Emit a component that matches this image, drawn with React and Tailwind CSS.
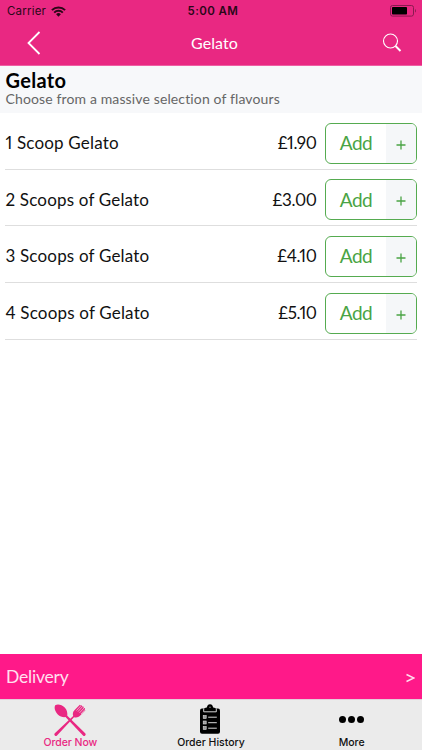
import React from "react";

const items = [
  { name: "1 Scoop Gelato", price: "£1.90" },
  { name: "2 Scoops of Gelato", price: "£3.00" },
  { name: "3 Scoops of Gelato", price: "£4.10" },
  { name: "4 Scoops of Gelato", price: "£5.10" },
];

function WifiIcon() {
  return (
    <svg width="15" height="11" viewBox="0 0 15 11" fill="none" stroke="#2b0718" strokeWidth="2">
      <path d="M0.9 4.1a9.4 9.4 0 0 1 13.2 0" />
      <path d="M3.2 6.6a6.1 6.1 0 0 1 8.6 0" />
      <path d="M7.5 10.7 5.1 8.3a3.4 3.4 0 0 1 4.8 0z" fill="#2b0718" stroke="none" />
    </svg>
  );
}

function BatteryIcon() {
  return (
    <svg width="27" height="12" viewBox="0 0 27 12">
      <rect x="0.5" y="0.5" width="23" height="10.6" rx="2" fill="none" stroke="#8a1a50" />
      <rect x="2" y="2" width="15" height="7.6" rx="0.8" fill="#000" />
      <path d="M25 4v3.6c1.2-.5 1.2-3.1 0-3.6z" fill="#8a1a50" />
    </svg>
  );
}

function CutleryIcon() {
  return (
    <svg width="34" height="34" viewBox="0 0 34 34" fill="#e92882">
      {/* spoon */}
      <path d="M2.2 2.2C5 .8 9 1.8 11.7 4.6c2.2 2.3 2.9 5.2 2.6 8.1L32.2 30.2a1.5 1.5 0 0 1-2.2 2.2L12.5 14.1c-2.7.3-5.5-.5-7.7-2.7C2 8.5.9 4.5 2.2 2.2z" />
      {/* fork */}
      <path d="M4 32.4A1.5 1.5 0 0 1 1.8 30.2L20.2 13c-.7-2.200-.4-4.200 1.200-5.800l5.400-5.500 1 .9 1-.3.5 1.300 1.200-.1.200 1.400 1.300.1-.3 1.300.7 1-5.400 5.500c-1.700 1.700-3.800 2-6 1.400z" />
      <path d="m28 2.6-4.500 4.900M29.500 3.700 25 8.600M31 5l-4.500 4.900M32 6.600l-4 4.400" stroke="#ebebeb" strokeWidth=".65" />
    </svg>
  );
}

function ClipboardIcon() {
  return (
    <svg width="20" height="30" viewBox="0 0 20 30">
      <rect x="0" y="4.5" width="20" height="25.3" rx="2" fill="#000" />
      <path d="M4.2 7.300V5.500c0-1.300 1-1.700 2.600-1.900C7.300 1.500 8.200.3 10 .3s2.700 1.200 3.200 3.300c1.600.2 2.600.6 2.600 1.900v1.800z" fill="#000" />
      <path d="M3.7 4.500v3.300h12.600V4.500" fill="none" stroke="#ebebeb" strokeWidth=".9" />
      <circle cx="10" cy="3.3" r=".8" fill="#888" />
      {[11.5, 17, 22.5].map((y) => (
        <g key={y}>
          <rect x="3.2" y={y} width="3" height="3" fill="#999" stroke="#ddd" strokeWidth=".6" />
          <path d={`M8.2 ${y + 1.7}h8.6`} stroke="#d8d8d8" />
        </g>
      ))}
    </svg>
  );
}

function MenuRow({ item }) {
  return (
    <div className="mx-[5px] h-[56.67px] flex items-center border-b border-[#dedede] text-[17px] text-[#111] proportional-nums">
      <span className="flex-1 pt-[4px] pl-[0.5px] tracking-[0.18px]">{item.name}</span>
      <span className="pt-[4px] mr-[8.5px] tracking-[-0.4px]">{item.price}</span>
      <button className="w-[92px] h-[41px] mt-[5px] flex items-stretch border-[1.5px] border-[#55ab50] rounded-[6px] overflow-hidden text-[#49a444] bg-white">
        <span className="w-[60px] flex items-center justify-center text-[19px] tracking-[-0.4px]">Add</span>
        <span className="flex-1 flex items-center justify-center bg-[#f5f7f9] pt-[3px]">
          <svg width="10" height="10" viewBox="0 0 10 10" stroke="#49a444" strokeWidth="1.3">
            <path d="M5 .5v9M.5 5h9" />
          </svg>
        </span>
      </button>
    </div>
  );
}

export default function App() {
  return (
    <div className="w-full h-screen flex flex-col overflow-hidden bg-white font-['Lato',sans-serif]">
      {/* Status bar + nav bar */}
      <header className="h-[66px] shrink-0 bg-[#e92882] border-b border-[#ee5fa3]">
        <div className="h-[22px] pl-[7px] pr-[5px] grid grid-cols-3 items-center font-['Inter',sans-serif] text-[#2b0718]">
          <div className="flex items-center gap-[5px] pt-px text-[11.5px] tracking-[0.2px]">
            Carrier
            <WifiIcon />
          </div>
          <div className="pt-px pl-[2px] text-center text-[11.5px] font-semibold tracking-[0.4px]">5:00 AM</div>
          <div className="flex justify-end">
            <BatteryIcon />
          </div>
        </div>
        <div className="h-[43px] pl-[27px] pr-[20px] grid grid-cols-3 items-center text-white">
          <svg className="-mt-[2px]" width="14" height="24" viewBox="0 0 14 24" fill="none" stroke="currentColor" strokeWidth="1.8">
            <path d="M12.5 1 1.5 12l11 11" />
          </svg>
          <h1 className="-mt-px text-center text-[16px] tracking-[0.1px]">Gelato</h1>
          <svg className="justify-self-end -mt-[2px]" width="20" height="20" viewBox="0 0 20 20" fill="none" stroke="currentColor">
            <circle cx="8.5" cy="8" r="7" strokeWidth="1.1" />
            <path d="m13.5 13 5 5" strokeWidth="2" />
          </svg>
        </div>
      </header>

      <div className="h-[47px] shrink-0 pl-[5.5px] pt-[2px] bg-[#f7f8fa]">
        <h2 className="text-[20px] leading-[24px] font-bold tracking-[0.3px] text-black">Gelato</h2>
        <p className="text-[14px] leading-[14px] tracking-[0.13px] text-[#666]">Choose from a massive selection of flavours</p>
      </div>

      <main className="flex-1">
        {items.map((item) => (
          <MenuRow key={item.name} item={item} />
        ))}
      </main>

      <div className="h-[45px] shrink-0 pl-[6px] pr-[7px] flex items-center justify-between bg-[#ff1989] text-[17.5px] tracking-[-0.2px] text-[#ffe0ef]">
        <span className="pt-[2px]">Delivery</span>
        <svg className="mt-[3px]" width="9" height="10" viewBox="0 0 9 10" fill="none" stroke="currentColor" strokeWidth="1.5">
          <path d="m.5 1.5 7.5 3.5-7.5 3.5" />
        </svg>
      </div>

      {/* Tab bar */}
      <nav className="h-[51px] shrink-0 grid grid-cols-3 bg-[#ebebeb] border-t border-[#e3cfd9] font-['Inter',sans-serif] text-[10.5px] leading-[12px] font-medium text-[#111]">
        <div className="flex flex-col items-center text-[#e92882]">
          <div className="h-[37px] pt-[3px]">
            <CutleryIcon />
          </div>
          <span className="tracking-[-0.05px]">Order Now</span>
        </div>
        <div className="flex flex-col items-center">
          <div className="h-[37px] pt-[4px] pr-px">
            <ClipboardIcon />
          </div>
          <span>Order History</span>
        </div>
        <div className="flex flex-col items-center">
          <div className="h-[37px] flex items-center gap-[2px] pt-[2px]">
            <span className="size-[7px] rounded-full bg-black" />
            <span className="size-[7px] rounded-full bg-black" />
            <span className="size-[7px] rounded-full bg-black" />
          </div>
          <span>More</span>
        </div>
      </nav>
    </div>
  );
}
